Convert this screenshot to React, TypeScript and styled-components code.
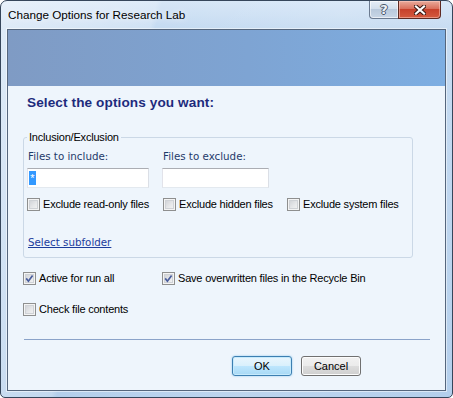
import React from 'react';
import styled, { createGlobalStyle } from 'styled-components';

const GlobalStyle = createGlobalStyle`
  html, body {
    margin: 0;
    padding: 0;
    background: #ffffff;
  }
  body {
    font-family: 'Liberation Sans', Arial, sans-serif;
  }
  * {
    box-sizing: border-box;
  }
`;

const CheckBox = ({ checked }: { checked?: boolean }) => (
  <Box>
    {checked && (
      <svg width="11" height="11" viewBox="0 0 11 11">
        <path d="M2.2 5.4 L4.4 8.2 L8.6 2.4" fill="none" stroke="#4a5e9d" strokeWidth="1.7" />
      </svg>
    )}
  </Box>
);

const Check = ({
  label,
  checked,
  width,
}: {
  label: string;
  checked?: boolean;
  width?: number;
}) => (
  <CheckItem $width={width}>
    <CheckBox checked={checked} />
    <CheckLabel>{label}</CheckLabel>
  </CheckItem>
);

const App = () => {
  return (
    <>
      <GlobalStyle />
      <Window>
        <TitleBar>
          <Title>Change Options for Research Lab</Title>
          <CaptionButtons>
            <HelpButton>?</HelpButton>
            <CloseButton>
              <svg width="12" height="10" viewBox="0 0 12 10">
                <path d="M2 1.5 L10 8.5 M10 1.5 L2 8.5" stroke="#3b1812" strokeWidth="4.2" strokeLinecap="square" />
                <path d="M2 1.5 L10 8.5 M10 1.5 L2 8.5" stroke="#ffffff" strokeWidth="2.2" strokeLinecap="square" />
              </svg>
            </CloseButton>
          </CaptionButtons>
        </TitleBar>

        <Client>
          <Banner />
          <Heading>Select the options you want:</Heading>

          <GroupBox>
            <Legend>Inclusion/Exclusion</Legend>
            <FieldRow>
              <Field $width={135}>
                <FieldLabel>Files to include:</FieldLabel>
                <TextBox $width={122}>
                  <Selected>*</Selected>
                </TextBox>
              </Field>
              <Field>
                <FieldLabel>Files to exclude:</FieldLabel>
                <TextBox $width={107} />
              </Field>
            </FieldRow>
            <CheckRow>
              <Check label="Exclude read-only files" width={136} />
              <Check label="Exclude hidden files" width={124} />
              <Check label="Exclude system files" />
            </CheckRow>
            <LinkText>Select subfolder</LinkText>
          </GroupBox>

          <OptionRow $top={12}>
            <Check label="Active for run all" checked width={139} />
            <Check label="Save overwritten files in the Recycle Bin" checked />
          </OptionRow>
          <OptionRow $top={15}>
            <Check label="Check file contents" />
          </OptionRow>

          <Separator />

          <ButtonRow>
            <DialogButton $default>OK</DialogButton>
            <DialogButton>Cancel</DialogButton>
          </ButtonRow>
        </Client>
      </Window>
    </>
  );
};

export default App;

const Window = styled.div`
  width: 453px;
  height: 398px;
  border: 1px solid #36465b;
  border-radius: 7px 7px 5px 5px;
  padding: 0 6px 6px 6px;
  display: flex;
  flex-direction: column;
  overflow: hidden;
  background: linear-gradient(
      105deg,
      rgba(255, 255, 255, 0.45) 0%,
      rgba(255, 255, 255, 0.2) 28%,
      rgba(255, 255, 255, 0) 29%,
      rgba(255, 255, 255, 0.12) 62%,
      rgba(255, 255, 255, 0) 100%
    ),
    linear-gradient(to bottom, #d6e6f7 0px, #c4daf1 28px, #b4cfec 100%);
`;

const TitleBar = styled.div`
  height: 28px;
  display: flex;
  justify-content: space-between;
  align-items: flex-start;
  padding-right: 5px;
`;

const Title = styled.span`
  padding: 7px 0 0 1px;
  font-size: 11.7px;
  line-height: 14px;
  color: #000000;
  text-shadow: 0 0 6px rgba(255, 255, 255, 0.95);
`;

const CaptionButtons = styled.div`
  display: flex;
  height: 18px;
`;

const HelpButton = styled.div`
  width: 29px;
  height: 18px;
  border: 1px solid #6b7a90;
  border-top: none;
  border-right: none;
  border-radius: 0 0 0 4px;
  background: linear-gradient(to bottom, #e6eef7 0%, #d3dfec 45%, #b9c9dc 50%, #c8d6e6 100%);
  box-shadow: inset 0 0 0 1px rgba(255, 255, 255, 0.6);
  display: flex;
  align-items: center;
  justify-content: center;
  font: bold 13px/1 'DejaVu Sans', sans-serif;
  color: #eef2f7;
  text-shadow: 1px 0 #4a586c, -1px 0 #4a586c, 0 1px #4a586c, 0 -1px #4a586c;
`;

const CloseButton = styled.div`
  width: 43px;
  height: 18px;
  border: 1px solid #5e2a22;
  border-top: none;
  border-radius: 0 0 4px 0;
  background: linear-gradient(to bottom, #e9ab9c 0%, #d9705c 45%, #c7412b 50%, #d45a3e 100%);
  box-shadow: inset 0 0 0 1px rgba(255, 210, 200, 0.5);
  display: flex;
  align-items: center;
  justify-content: center;
`;

const Client = styled.div`
  flex: 1;
  display: flex;
  flex-direction: column;
  border: 1px solid #55667d;
  background: #eef5fc;
  box-shadow: 0 0 0 1px rgba(255, 255, 255, 0.5);
`;

const Banner = styled.div`
  height: 56px;
  background: linear-gradient(to right, #7f9bc4 0%, #7ea4d3 55%, #7daee2 100%);
`;

const Heading = styled.h1`
  margin: 6px 0 0 19px;
  font-family: 'Liberation Sans', Arial, sans-serif;
  font-size: 13.6px;
  font-weight: bold;
  line-height: 22px;
  letter-spacing: 0.1px;
  color: #1d2b7c;
`;

const GroupBox = styled.fieldset`
  margin: 16px 0 0 15px;
  width: 390px;
  min-width: 0;
  padding: 0 4px 8px 3px;
  border: 1px solid #cbd8e6;
  border-radius: 3px;
  display: flex;
  flex-direction: column;
`;

const Legend = styled.legend`
  padding: 0 2px;
  font-size: 11px;
  line-height: 14px;
  letter-spacing: -0.2px;
  color: #000000;
`;

const FieldRow = styled.div`
  display: flex;
  margin-top: 5px;
`;

const Field = styled.div<{ $width?: number }>`
  display: flex;
  flex-direction: column;
  width: ${(props) => (props.$width ? `${props.$width}px` : 'auto')};
`;

const FieldLabel = styled.span`
  padding-left: 1px;
  font-family: 'DejaVu Sans', Verdana, sans-serif;
  font-size: 10.3px;
  line-height: 14px;
  color: #1f3a6a;
`;

const TextBox = styled.div<{ $width: number }>`
  margin-top: 5px;
  width: ${(props) => props.$width}px;
  height: 20px;
  border: 1px solid;
  border-color: #abadb3 #dbdfe6 #e3e9ef #e2e3ea;
  background: #ffffff;
  display: flex;
  align-items: center;
  padding-left: 1px;
`;

const Selected = styled.span`
  width: 7px;
  height: 14px;
  background: #3399ff;
  color: #ffffff;
  font-size: 11px;
  line-height: 14px;
  text-align: center;
`;

const CheckRow = styled.div`
  display: flex;
  height: 16px;
  margin-top: 8px;
`;

const OptionRow = styled.div<{ $top: number }>`
  display: flex;
  height: 16px;
  margin: ${(props) => props.$top}px 0 0 15px;
`;

const CheckItem = styled.div<{ $width?: number }>`
  display: flex;
  align-items: center;
  gap: 3px;
  width: ${(props) => (props.$width ? `${props.$width}px` : 'auto')};
`;

const Box = styled.span`
  width: 13px;
  height: 13px;
  flex: none;
  border: 1px solid #8e8f8f;
  background: linear-gradient(135deg, #c9ccd1 0%, #e6e7e9 55%, #f7f7f7 100%);
  box-shadow: inset 0 0 0 1px #f4f4f4, inset 0 0 0 2px #cfd2d6;
  display: flex;
  align-items: center;
  justify-content: center;
`;

const CheckLabel = styled.span`
  font-size: 11px;
  line-height: 14px;
  letter-spacing: -0.2px;
  color: #000000;
  white-space: nowrap;
`;

const LinkText = styled.span`
  align-self: flex-start;
  margin: 23px 0 0 1px;
  font-family: 'DejaVu Sans', Verdana, sans-serif;
  font-size: 10.3px;
  line-height: 14px;
  color: #1c3c9c;
  text-decoration: underline;
`;

const Separator = styled.div`
  margin: 22px 0 0 16px;
  width: 406px;
  height: 1px;
  background: #8aa3c9;
`;

const ButtonRow = styled.div`
  display: flex;
  gap: 9px;
  margin-top: 16px;
  padding-left: 224px;
`;

const DialogButton = styled.button<{ $default?: boolean }>`
  width: 60px;
  height: 20px;
  padding: 0;
  border-radius: 3px;
  font-family: 'Liberation Sans', Arial, sans-serif;
  font-size: 11px;
  color: #000000;
  border: 1px solid ${(props) => (props.$default ? '#3c7fb1' : '#707070')};
  background: ${(props) =>
    props.$default
      ? 'linear-gradient(to bottom, #eaf6fd 0%, #d9f0fc 50%, #bee6fd 50%, #a7d9f5 100%)'
      : 'linear-gradient(to bottom, #f2f2f2 0%, #ebebeb 50%, #dddddd 50%, #cfcfcf 100%)'};
  box-shadow: ${(props) =>
    props.$default
      ? 'inset 0 0 0 1px #c6eafc, 0 0 2px rgba(60, 160, 230, 0.6)'
      : 'inset 0 0 0 1px #fcfcfc'};
`;
